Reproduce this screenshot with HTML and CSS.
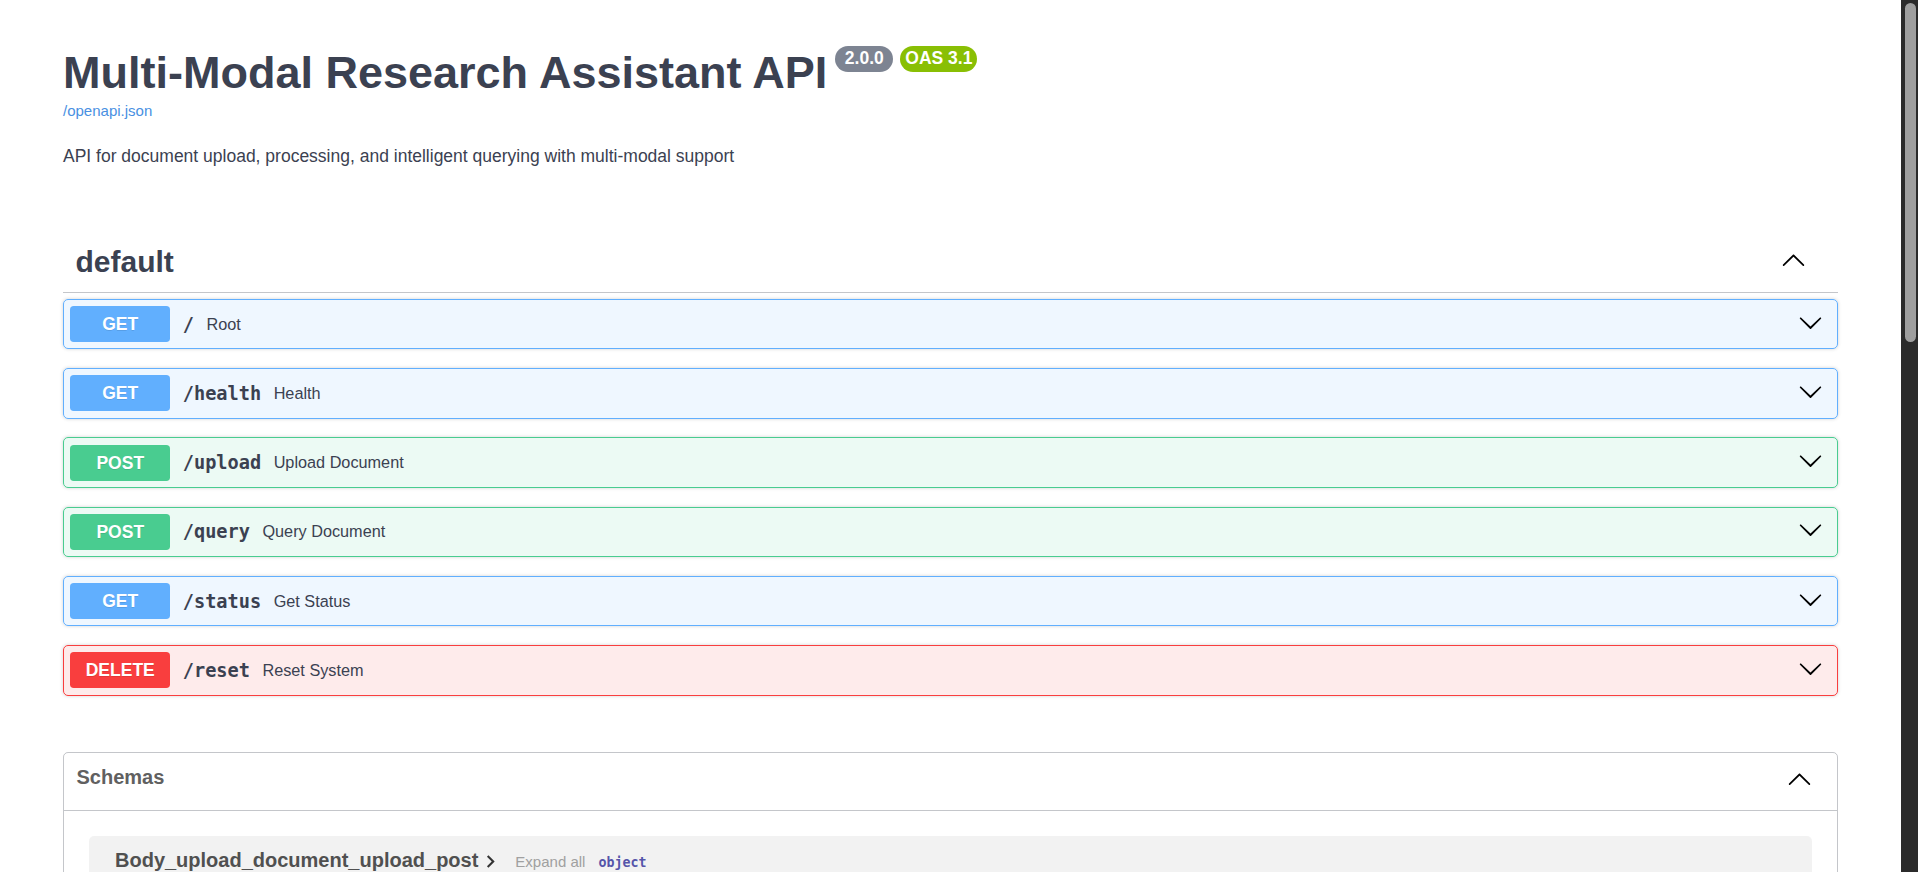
FILE: index.html
```html
<!DOCTYPE html>
<html lang="en">
<head>
<meta charset="utf-8">
<title>Multi-Modal Research Assistant API - Swagger UI</title>
<link rel="stylesheet" href="styles.css">
</head>
<body>
<div class="viewport">
  <div class="wrapper">
    <section class="info">
      <div class="title-row">
        <h2 class="title">Multi-Modal Research Assistant API</h2>
        <span class="badge badge-version">2.0.0</span>
        <span class="badge badge-oas">OAS 3.1</span>
      </div>
      <a class="spec-link" href="#">/openapi.json</a>
      <p class="description">API for document upload, processing, and intelligent querying with multi-modal support</p>
    </section>

    <section class="tag-section">
      <div class="tag-head">
        <h3 class="tag-name">default</h3>
        <svg class="arrow tag-arrow" viewBox="0 0 20 20" width="25" height="25"><path d="M17.418 14.908c.272.268.709.268.979 0s.271-.701 0-.969l-7.908-7.83c-.27-.268-.707-.268-.979 0l-7.908 7.83c-.27.268-.27.701 0 .969.271.268.709.268.979 0L10 7.767l7.418 7.141z"/></svg>
      </div>

      <div class="opblock get">
        <div class="summary">
          <span class="method">GET</span>
          <span class="path">/</span>
          <span class="summary-desc">Root</span>
          <svg class="arrow op-arrow" viewBox="0 0 20 20" width="25" height="25"><path d="M17.418 6.109c.272-.268.709-.268.979 0s.271.701 0 .969l-7.908 7.83c-.27.268-.707.268-.979 0l-7.908-7.830c-.27-.268-.27-.701 0-.969.271-.268.709-.268.979 0L10 13.25l7.418-7.141z"/></svg>
        </div>
      </div>

      <div class="opblock get">
        <div class="summary">
          <span class="method">GET</span>
          <span class="path">/health</span>
          <span class="summary-desc">Health</span>
          <svg class="arrow op-arrow" viewBox="0 0 20 20" width="25" height="25"><path d="M17.418 6.109c.272-.268.709-.268.979 0s.271.701 0 .969l-7.908 7.83c-.27.268-.707.268-.979 0l-7.908-7.83c-.27-.268-.27-.701 0-.969.271-.268.709-.268.979 0L10 13.25l7.418-7.141z"/></svg>
        </div>
      </div>

      <div class="opblock post">
        <div class="summary">
          <span class="method">POST</span>
          <span class="path">/upload</span>
          <span class="summary-desc">Upload Document</span>
          <svg class="arrow op-arrow" viewBox="0 0 20 20" width="25" height="25"><path d="M17.418 6.109c.272-.268.709-.268.979 0s.271.701 0 .969l-7.908 7.83c-.27.268-.707.268-.979 0l-7.908-7.83c-.27-.268-.27-.701 0-.969.271-.268.709-.268.979 0L10 13.25l7.418-7.141z"/></svg>
        </div>
      </div>

      <div class="opblock post">
        <div class="summary">
          <span class="method">POST</span>
          <span class="path">/query</span>
          <span class="summary-desc">Query Document</span>
          <svg class="arrow op-arrow" viewBox="0 0 20 20" width="25" height="25"><path d="M17.418 6.109c.272-.268.709-.268.979 0s.271.701 0 .969l-7.908 7.83c-.27.268-.707.268-.979 0l-7.908-7.83c-.27-.268-.27-.701 0-.969.271-.268.709-.268.979 0L10 13.25l7.418-7.141z"/></svg>
        </div>
      </div>

      <div class="opblock get">
        <div class="summary">
          <span class="method">GET</span>
          <span class="path">/status</span>
          <span class="summary-desc">Get Status</span>
          <svg class="arrow op-arrow" viewBox="0 0 20 20" width="25" height="25"><path d="M17.418 6.109c.272-.268.709-.268.979 0s.271.701 0 .969l-7.908 7.83c-.27.268-.707.268-.979 0l-7.908-7.83c-.27-.268-.27-.701 0-.969.271-.268.709-.268.979 0L10 13.25l7.418-7.141z"/></svg>
        </div>
      </div>

      <div class="opblock delete">
        <div class="summary">
          <span class="method">DELETE</span>
          <span class="path">/reset</span>
          <span class="summary-desc">Reset System</span>
          <svg class="arrow op-arrow" viewBox="0 0 20 20" width="25" height="25"><path d="M17.418 6.109c.272-.268.709-.268.979 0s.271.701 0 .969l-7.908 7.83c-.27.268-.707.268-.979 0l-7.908-7.83c-.27-.268-.27-.701 0-.969.271-.268.709-.268.979 0L10 13.25l7.418-7.141z"/></svg>
        </div>
      </div>
    </section>

    <section class="models">
      <div class="models-head">
        <span class="models-title">Schemas</span>
        <svg class="arrow models-arrow" viewBox="0 0 20 20" width="25" height="25"><path d="M17.418 14.908c.272.268.709.268.979 0s.271-.701 0-.969l-7.908-7.83c-.27-.268-.707-.268-.979 0l-7.908 7.83c-.27.268-.27.701 0 .969.271.268.709.268.979 0L10 7.767l7.418 7.141z"/></svg>
      </div>
      <div class="model-container">
        <span class="model-title">Body_upload_document_upload_post</span>
        <svg class="model-toggle" viewBox="0 0 24 24" width="25" height="25"><path d="M10 6 8.59 7.41 13.17 12l-4.58 4.59L10 18l6-6z"/></svg>
        <span class="model-hint">Expand all</span>
        <span class="prop-type">object</span>
      </div>
    </section>
  </div>
</div>
<div class="scrollbar"><div class="scroll-thumb"></div></div>
</body>
</html>
```

FILE: styles.css
```css
html, body {
  margin: 0;
  padding: 0;
  height: 100%;
  overflow: hidden;
  background: #fff;
}

body {
  display: flex;
  font-family: "Liberation Sans", Arial, sans-serif;
  color: #3b4151;
}

.viewport {
  flex: 1;
  min-width: 0;
  overflow: hidden;
}

.wrapper {
  box-sizing: border-box;
  max-width: 1825px;
  margin: 0 auto;
  padding: 0 25px;
}

/* ---------- info ---------- */
.info {
  padding-top: 46px;
}

.title-row {
  display: flex;
  align-items: flex-start;
}

.title {
  margin: 0;
  font-size: 45px;
  line-height: 53px;
  font-weight: 700;
  color: #3b4151;
}

.badge {
  display: inline-block;
  box-sizing: border-box;
  height: 26px;
  padding-top: 1.5px;
  font-size: 17.5px;
  line-height: 21px;
  font-weight: 700;
  color: #fff;
  border-radius: 57px;
  white-space: nowrap;
}

.badge-version {
  margin-left: 8px;
  padding-left: 9.5px;
  padding-right: 9.5px;
  background: #7d8492;
}

.badge-oas {
  margin-left: 7px;
  padding-left: 5px;
  padding-right: 5px;
  background: #89bf04;
}

.spec-link {
  display: block;
  margin-top: 3px;
  font-size: 15px;
  line-height: 17px;
  color: #4990e2;
  text-decoration: none;
  width: max-content;
}

.description {
  margin: 26.5px 0 0;
  font-size: 17.5px;
  line-height: 20px;
  color: #3b4151;
}

/* ---------- operations ---------- */
.tag-section {
  display: flex;
  flex-direction: column;
  margin-top: 65px;
}

.tag-head {
  display: flex;
  align-items: center;
  justify-content: space-between;
  height: 61px;
  padding: 0 32px 0 12.5px;
  border-bottom: 1px solid rgba(59, 65, 81, 0.3);
  margin-bottom: 6.25px;
}

.tag-name {
  margin: 0;
  font-size: 30px;
  line-height: 35px;
  font-weight: 700;
  color: #3b4151;
}

.arrow {
  display: block;
  flex: none;
  fill: #000;
}

.tag-arrow {
  margin-bottom: 2.6px;
}

.opblock {
  border: 1px solid #000;
  border-radius: 5px;
  box-shadow: 0 0 3.75px rgba(0, 0, 0, 0.19);
  margin-bottom: 18.75px;
}

.opblock.get {
  background: rgba(97, 175, 254, 0.1);
  border-color: #61affe;
}

.opblock.post {
  background: rgba(73, 204, 144, 0.1);
  border-color: #49cc90;
}

.opblock.delete {
  background: rgba(249, 62, 62, 0.1);
  border-color: #f93e3e;
}

.summary {
  display: flex;
  align-items: center;
  padding: 6.25px 14px 6.25px 6.25px;
}

.method {
  flex: none;
  min-width: 100px;
  height: 36px;
  line-height: 36px;
  border-radius: 3.75px;
  text-align: center;
  font-size: 17.5px;
  font-weight: 700;
  color: #fff;
  text-shadow: 0 1px 0 rgba(0, 0, 0, 0.1);
}

.get .method { background: #61affe; }
.post .method { background: #49cc90; }
.delete .method { background: #f93e3e; }

.path {
  flex: none;
  padding: 0 12.5px;
  font-family: "DejaVu Sans Mono", "Liberation Mono", monospace;
  font-size: 18.6px;
  font-weight: 700;
  color: #3b4151;
}

.summary-desc {
  flex: 1;
  font-size: 16.25px;
  color: #3b4151;
}

.op-arrow {
  margin-bottom: 4px;
}

/* ---------- models ---------- */
.models {
  margin-top: 37.5px;
  border: 1px solid rgba(59, 65, 81, 0.3);
  border-radius: 5px;
}

.models-head {
  display: flex;
  align-items: flex-start;
  justify-content: space-between;
  box-sizing: border-box;
  height: 58px;
  padding: 0 25px 0 12.5px;
  border-bottom: 1px solid rgba(59, 65, 81, 0.3);
}

.models-title {
  margin-top: 13px;
  font-size: 20px;
  line-height: 23px;
  font-weight: 700;
  color: #606060;
}

.models-arrow {
  margin-top: 13px;
}

.model-container {
  display: flex;
  align-items: baseline;
  margin: 25px 25px 0;
  padding: 13px 26px 25px;
  background: rgba(0, 0, 0, 0.05);
  border-radius: 5px;
}

.model-title {
  font-size: 20px;
  line-height: 23px;
  font-weight: 700;
  color: #505050;
}

.model-toggle {
  display: block;
  align-self: center;
  flex: none;
  fill: #333;
}

.model-hint {
  margin-left: 12px;
  font-size: 15px;
  color: #a0a0a0;
}

.prop-type {
  margin-left: 13px;
  font-family: "DejaVu Sans Mono", "Liberation Mono", monospace;
  font-size: 13.3px;
  font-weight: 700;
  color: #55a;
}

/* ---------- scrollbar ---------- */
.scrollbar {
  flex: none;
  width: 17px;
  height: 100%;
  background: #2b2b2b;
}

.scroll-thumb {
  height: 339px;
  margin: 3px 2px 0 4px;
  border-radius: 6px;
  background: #9f9f9f;
}
```
